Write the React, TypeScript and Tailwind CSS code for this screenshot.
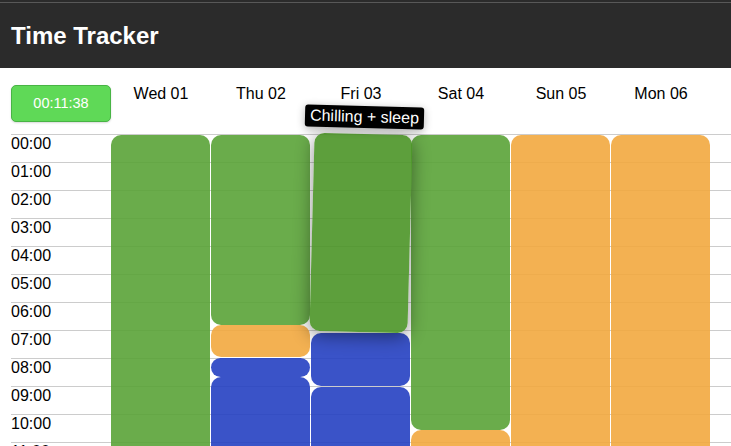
import React from "react";

const days = ["Wed 01", "Thu 02", "Fri 03", "Sat 04", "Sun 05", "Mon 06"];
const hours = Array.from({ length: 12 }, (_, i) => `${String(i).padStart(2, "0")}:00`);

// colores de los bloques
const green = "bg-[#5aa337]/90";
const orange = "bg-[#f2a83f]/90";
const blue = "bg-[#2540c2]/90";

function Block({ color, h }: { color: string; h: string }) {
  return <div className={`${color} ${h} w-[99px] shrink-0 rounded-[10px]`} />;
}

export default function App() {
  return (
    <div className="h-screen overflow-hidden bg-white font-['Liberation_Sans',Arial,sans-serif] text-black">
      {/* --- HEADER --- */}
      <div className="h-[2px] bg-[#2b2b2b]" />
      <div className="h-[1px] bg-[#585858]" />
      <div className="h-[65px] bg-[#2b2b2b] px-[11px] pt-[19px]">
        <h1 className="text-[24px] font-bold leading-[28px] text-white">Time Tracker</h1>
      </div>

      {/* --- DIAS --- */}
      <div className="flex h-[66px] items-start pt-[17px] pl-[11px]">
        <button className="h-[37px] w-[100px] rounded-[5px] border border-[#48b445] bg-[#5fd957] text-[14.5px] text-white shadow-[0_1px_2px_rgba(0,0,0,0.15)]">
          00:11:38
        </button>
        {days.map((d) => (
          <div key={d} className="w-[100px] text-center text-[16px] leading-[18px]">
            {d}
          </div>
        ))}
      </div>

      {/* --- GRID --- */}
      <div className="relative pl-[11px]">
        {hours.map((h) => (
          <div key={h} className="h-[28px] border-t border-[#cccccc] text-[16px] leading-[18px]">
            {h}
          </div>
        ))}

        <div className="absolute left-[111px] top-[1px] flex">
          {/* Wed */}
          <div className="flex w-[100px] flex-col">
            <Block color={green} h="h-[400px]" />
          </div>
          {/* Thu */}
          <div className="flex w-[100px] flex-col">
            <Block color={green} h="h-[190px]" />
            <Block color={orange} h="h-[32px]" />
            <div className="h-[1px]" />
            <Block color={blue} h="h-[19px]" />
            <Block color={blue} h="h-[200px]" />
          </div>
          {/* Fri: bloque arrastrado */}
          <div className="relative flex w-[100px] flex-col">
            <div className="h-[198px] w-[99px]">
              <div className="ml-[1px] h-[198px] w-[98px] -translate-y-[1px] rotate-[1.5deg] rounded-[10px] bg-[#4b9527]/90 shadow-[0_4px_18px_rgba(0,0,0,0.45)]" />
            </div>
            <Block color={blue} h="h-[53px]" />
            <div className="h-[1px]" />
            <Block color={blue} h="h-[200px]" />
            <div className="absolute -top-[29px] left-[-6px] rotate-[1.5deg] whitespace-nowrap rounded-[3px] bg-black px-[5px] text-[16px] leading-[22px] text-white shadow-[0_2px_8px_rgba(0,0,0,0.3)]">
              Chilling + sleep
            </div>
          </div>
          {/* Sat */}
          <div className="flex w-[100px] flex-col">
            <Block color={green} h="h-[295px]" />
            <Block color={orange} h="h-[200px]" />
          </div>
          {/* Sun */}
          <div className="flex w-[100px] flex-col">
            <Block color={orange} h="h-[400px]" />
          </div>
          {/* Mon */}
          <div className="flex w-[100px] flex-col">
            <Block color={orange} h="h-[400px]" />
          </div>
        </div>
      </div>
    </div>
  );
}
